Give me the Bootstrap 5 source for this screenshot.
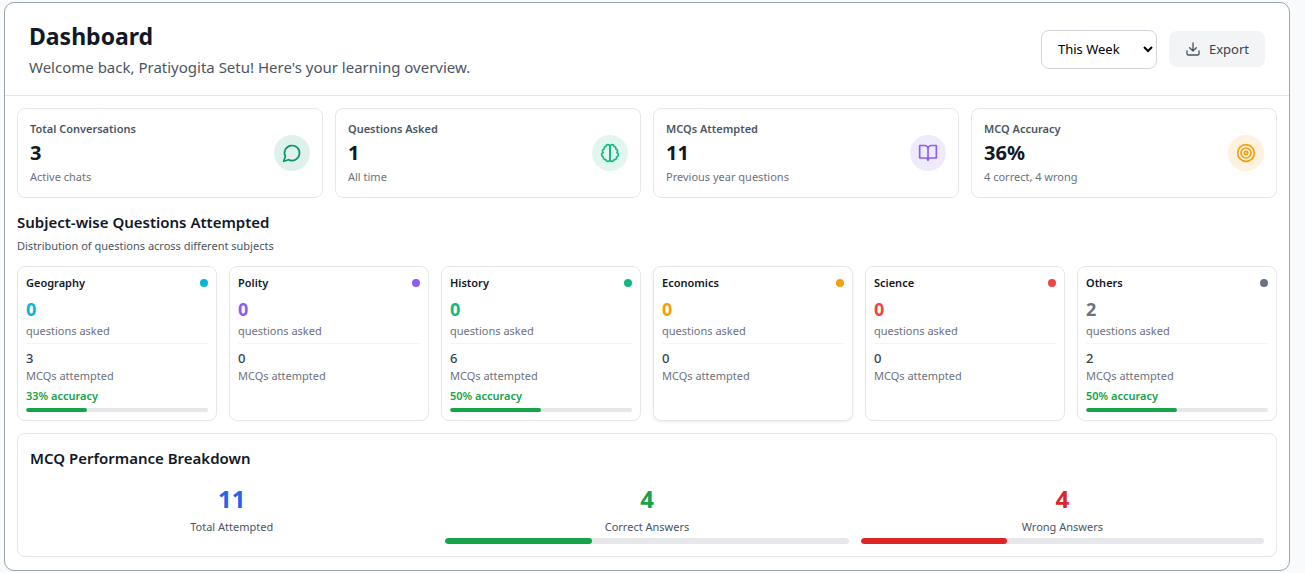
<!DOCTYPE html>
<html lang="en">
<head>
<meta charset="utf-8">
<meta name="viewport" content="width=device-width, initial-scale=1">
<title>Dashboard</title>
<link href="https://cdn.jsdelivr.net/npm/bootstrap@5.3.0/dist/css/bootstrap.min.css" rel="stylesheet">
<style>
  body { background: #f8fafc; color: #111827; font-family: "Noto Sans", "Open Sans", sans-serif; font-size: 11px; line-height: 16px; padding: 2px 15px 2px 4px; }
  h1, h2, p { margin: 0; }
  .shell { background: #fff; border: 1px solid #9ca3af; border-radius: 10px; }
  .topbar { border-bottom: 1px solid #e5e7eb; }
  .page-title { font-size: 23px; line-height: 34px; font-weight: 700; }
  .page-intro { margin-top: 2px; font-size: 15px; line-height: 24px; color: #4b5563; }
  .section-title { font-size: 15px; line-height: 24px; font-weight: 600; }
  .period { width: 116px; height: 39px; padding: 0 12px; border: 1px solid #d1d5db; border-radius: 8px; background: #fff; color: #000; font-size: 13px; }
  .export { --bs-btn-bg: #f3f4f6; --bs-btn-color: #374151; --bs-btn-hover-bg: #e5e7eb; --bs-btn-border-radius: 8px; --bs-btn-border-width: 0; --bs-btn-font-size: 13px; --bs-btn-line-height: 20px; }
  .export .line-icon { color: #4b5563; }
  .gap-12 { gap: 12px; }
  .p-12 { padding: 12px; }
  .content { padding: 12px 12px 13px; }
  .panel { border: 1px solid #e5e7eb; border-radius: 8px; background: #fff; }
  .shadow-soft { box-shadow: 0 1px 3px rgba(0, 0, 0, .08); }
  .stats { display: grid; grid-template-columns: repeat(4, minmax(0, 1fr)); }
  .subjects { display: grid; grid-template-columns: repeat(6, minmax(0, 1fr)); }
  .results { display: grid; grid-template-columns: repeat(3, minmax(0, 1fr)); }
  .stat-label { font-weight: 600; color: #4b5563; }
  .stat-value { font-size: 20px; line-height: 32px; font-weight: 700; }
  .muted { color: #6b7280; }
  .soft { color: #4b5563; }
  .disc { width: 36px; height: 36px; color: var(--tone); background: color-mix(in srgb, var(--tone) 13%, white); }
  .line-icon { fill: none; stroke: currentColor; stroke-width: 2; stroke-linecap: round; stroke-linejoin: round; }
  .subject-name { font-weight: 600; }
  .dot { width: 8px; height: 8px; background: var(--tone); }
  .asked { color: var(--tone); font-size: 18px; line-height: 28px; font-weight: 700; }
  .mcqs { border-top: 1px solid #f3f4f6; }
  .mcq-count { font-size: 13px; line-height: 20px; font-weight: 500; color: #374151; }
  .accuracy { color: #16a34a; font-weight: 600; }
  .meter { --bs-progress-bg: #e5e7eb; --bs-progress-height: 4px; --bs-progress-border-radius: 4px; --bs-progress-bar-bg: #16a34a; }
  .meter .progress-bar { border-radius: 4px; }
  .meter-lg { --bs-progress-height: 6px; margin-top: 3px; }
  .meter-bad { --bs-progress-bar-bg: #dc2626; }
  .result-value { font-size: 24px; line-height: 34px; font-weight: 700; }
  .result-label { margin-top: 3px; color: #4b5563; }
  @media (max-width: 900px) {
    .stats { grid-template-columns: repeat(2, minmax(0, 1fr)); }
    .subjects { grid-template-columns: repeat(3, minmax(0, 1fr)); }
  }
</style>
</head>
<body>
<div class="shell">
  <header class="topbar d-flex flex-wrap justify-content-between align-items-center gap-12 px-4 py-3">
    <div>
      <h1 class="page-title">Dashboard</h1>
      <p class="page-intro">Welcome back, Pratiyogita Setu! Here's your learning overview.</p>
    </div>
    <div class="d-flex align-items-center gap-12">
      <select class="period" aria-label="Period"><option>This Week</option><option>This Month</option><option>All Time</option></select>
      <button type="button" class="btn export d-flex align-items-center gap-2 px-3 py-2">
        <svg class="line-icon" width="16" height="16" viewBox="0 0 24 24" aria-hidden="true"><path d="M21 15v4a2 2 0 0 1-2 2H5a2 2 0 0 1-2-2v-4M7 10l5 5 5-5M12 15V3"/></svg>
        Export
      </button>
    </div>
  </header>

  <main class="content d-flex flex-column gap-12">
    <section class="stats gap-12">
      <div class="panel p-12 d-flex justify-content-between align-items-center">
        <div><p class="stat-label">Total Conversations</p><p class="stat-value">3</p><p class="muted">Active chats</p></div>
        <span class="disc rounded-circle d-flex align-items-center justify-content-center" style="--tone:#059669">
          <svg class="line-icon" width="20" height="20" viewBox="0 0 24 24" aria-hidden="true"><path d="M7.9 20A9 9 0 1 0 4 16.1L2 22Z"/></svg></span>
      </div>
      <div class="panel p-12 d-flex justify-content-between align-items-center">
        <div><p class="stat-label">Questions Asked</p><p class="stat-value">1</p><p class="muted">All time</p></div>
        <span class="disc rounded-circle d-flex align-items-center justify-content-center" style="--tone:#10b981">
          <svg class="line-icon" width="20" height="20" viewBox="0 0 24 24" aria-hidden="true"><path d="M9.5 2A2.5 2.5 0 0 1 12 4.5v15a2.5 2.5 0 0 1-4.96.44 2.5 2.5 0 0 1-2.96-3.08 3 3 0 0 1-.34-5.58 2.5 2.5 0 0 1 1.32-4.24 2.5 2.5 0 0 1 1.98-3A2.5 2.5 0 0 1 9.5 2Z"/><path d="M14.5 2A2.5 2.5 0 0 0 12 4.5v15a2.5 2.5 0 0 0 4.96.44 2.5 2.5 0 0 0 2.96-3.08 3 3 0 0 0 .34-5.58 2.5 2.5 0 0 0-1.32-4.24 2.5 2.5 0 0 0-1.98-3A2.5 2.5 0 0 0 14.5 2Z"/></svg></span>
      </div>
      <div class="panel p-12 d-flex justify-content-between align-items-center">
        <div><p class="stat-label">MCQs Attempted</p><p class="stat-value">11</p><p class="muted">Previous year questions</p></div>
        <span class="disc rounded-circle d-flex align-items-center justify-content-center" style="--tone:#8b5cf6">
          <svg class="line-icon" width="20" height="20" viewBox="0 0 24 24" aria-hidden="true"><path d="M2 3h6a4 4 0 0 1 4 4v14a3 3 0 0 0-3-3H2zM22 3h-6a4 4 0 0 0-4 4v14a3 3 0 0 1 3-3h7z"/></svg></span>
      </div>
      <div class="panel p-12 d-flex justify-content-between align-items-center">
        <div><p class="stat-label">MCQ Accuracy</p><p class="stat-value">36%</p><p class="muted">4 correct, 4 wrong</p></div>
        <span class="disc rounded-circle d-flex align-items-center justify-content-center" style="--tone:#f59e0b">
          <svg class="line-icon" width="20" height="20" viewBox="0 0 24 24" aria-hidden="true"><circle cx="12" cy="12" r="10"/><circle cx="12" cy="12" r="6"/><circle cx="12" cy="12" r="2"/></svg></span>
      </div>
    </section>

    <section>
      <h2 class="section-title">Subject-wise Questions Attempted</h2>
      <p class="soft mt-1">Distribution of questions across different subjects</p>
      <div class="subjects gap-12 mt-2 pt-1">
        <div class="panel p-2" style="--tone:#06b6d4">
          <div class="d-flex justify-content-between align-items-center"><span class="subject-name">Geography</span><span class="dot rounded-circle"></span></div>
          <p class="asked mt-1">0</p><p class="muted">questions asked</p>
          <div class="mcqs mt-1 pt-1"><p class="mcq-count">3</p><p class="muted">MCQs attempted</p>
            <p class="accuracy mt-1">33% accuracy</p>
            <div class="progress meter mt-1" role="progressbar" aria-label="Geography accuracy" aria-valuenow="33" aria-valuemin="0" aria-valuemax="100"><div class="progress-bar" style="width:33.33%"></div></div></div>
        </div>
        <div class="panel p-2" style="--tone:#8b5cf6">
          <div class="d-flex justify-content-between align-items-center"><span class="subject-name">Polity</span><span class="dot rounded-circle"></span></div>
          <p class="asked mt-1">0</p><p class="muted">questions asked</p>
          <div class="mcqs mt-1 pt-1"><p class="mcq-count">0</p><p class="muted">MCQs attempted</p></div>
        </div>
        <div class="panel p-2" style="--tone:#10b981">
          <div class="d-flex justify-content-between align-items-center"><span class="subject-name">History</span><span class="dot rounded-circle"></span></div>
          <p class="asked mt-1">0</p><p class="muted">questions asked</p>
          <div class="mcqs mt-1 pt-1"><p class="mcq-count">6</p><p class="muted">MCQs attempted</p>
            <p class="accuracy mt-1">50% accuracy</p>
            <div class="progress meter mt-1" role="progressbar" aria-label="History accuracy" aria-valuenow="50" aria-valuemin="0" aria-valuemax="100"><div class="progress-bar" style="width:50%"></div></div></div>
        </div>
        <div class="panel p-2 shadow-soft" style="--tone:#f59e0b">
          <div class="d-flex justify-content-between align-items-center"><span class="subject-name">Economics</span><span class="dot rounded-circle"></span></div>
          <p class="asked mt-1">0</p><p class="muted">questions asked</p>
          <div class="mcqs mt-1 pt-1"><p class="mcq-count">0</p><p class="muted">MCQs attempted</p></div>
        </div>
        <div class="panel p-2" style="--tone:#ef4444">
          <div class="d-flex justify-content-between align-items-center"><span class="subject-name">Science</span><span class="dot rounded-circle"></span></div>
          <p class="asked mt-1">0</p><p class="muted">questions asked</p>
          <div class="mcqs mt-1 pt-1"><p class="mcq-count">0</p><p class="muted">MCQs attempted</p></div>
        </div>
        <div class="panel p-2" style="--tone:#6b7280">
          <div class="d-flex justify-content-between align-items-center"><span class="subject-name">Others</span><span class="dot rounded-circle"></span></div>
          <p class="asked mt-1">2</p><p class="muted">questions asked</p>
          <div class="mcqs mt-1 pt-1"><p class="mcq-count">2</p><p class="muted">MCQs attempted</p>
            <p class="accuracy mt-1">50% accuracy</p>
            <div class="progress meter mt-1" role="progressbar" aria-label="Others accuracy" aria-valuenow="50" aria-valuemin="0" aria-valuemax="100"><div class="progress-bar" style="width:50%"></div></div></div>
        </div>
      </div>
    </section>

    <section class="panel p-12">
      <h2 class="section-title">MCQ Performance Breakdown</h2>
      <div class="results gap-12 mt-2 pt-1 text-center">
        <div><p class="result-value" style="color:#2563eb">11</p><p class="result-label">Total Attempted</p></div>
        <div><p class="result-value" style="color:#16a34a">4</p><p class="result-label">Correct Answers</p>
          <div class="progress meter meter-lg" role="progressbar" aria-label="Correct answers" aria-valuenow="36" aria-valuemin="0" aria-valuemax="100"><div class="progress-bar" style="width:36.36%"></div></div></div>
        <div><p class="result-value" style="color:#dc2626">4</p><p class="result-label">Wrong Answers</p>
          <div class="progress meter meter-lg meter-bad" role="progressbar" aria-label="Wrong answers" aria-valuenow="36" aria-valuemin="0" aria-valuemax="100"><div class="progress-bar" style="width:36.36%"></div></div></div>
      </div>
    </section>
  </main>
</div>
<script src="https://cdn.jsdelivr.net/npm/bootstrap@5.3.0/dist/js/bootstrap.bundle.min.js"></script>
</body>
</html>
